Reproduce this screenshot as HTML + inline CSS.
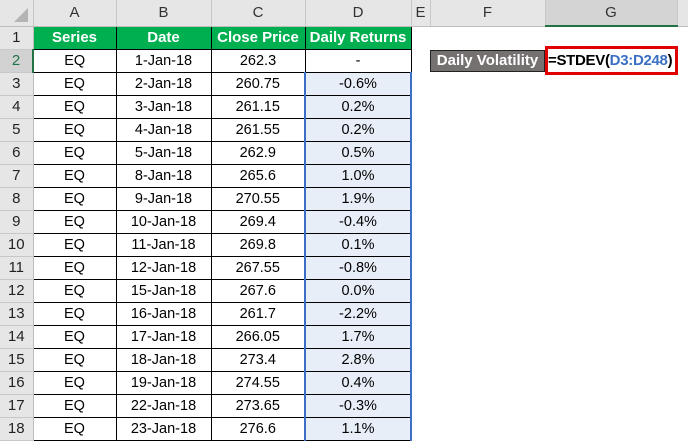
<!DOCTYPE html>
<html><head><style>
body{margin:0;width:688px;height:441px;overflow:hidden;background:#fff;font-family:"Liberation Sans",Calibri,sans-serif;position:relative}
table{border-collapse:collapse;table-layout:fixed;position:absolute;left:0;top:0}
td{padding:0;height:22px;text-align:center;font-size:14.5px;color:#000;white-space:nowrap;overflow:hidden}
tr.h td{height:25px;background:#e6e6e6;color:#333;font-size:15px;border-right:1px solid #c8c8c8;border-bottom:1px solid #bdbdbd}
td.rh{background:#e6e6e6;color:#222;font-size:15px;border-bottom:1px solid #c8c8c8;border-right:1px solid #bdbdbd}
td.d{border:1px solid #000}
td.g{background:#00b050;color:#fff;font-weight:bold;font-size:15px;border:1px solid #000}
td.s{background:#e8eef8;border:1px solid #000;border-left:2px solid #3b6fc4;border-right:2px solid #3b6fc4}
.vol{position:absolute;left:430px;top:50px;width:115px;height:22px;background:#767171;border:1px solid #222;box-sizing:border-box;color:#fff;font-weight:bold;font-size:15px;line-height:20px;text-align:center}
.f{position:absolute;left:545px;top:46px;width:133px;height:29px;border:3px solid #e00000;box-sizing:border-box;font-weight:bold;font-size:15px;line-height:23px;padding-left:0;background:#fff;white-space:nowrap;letter-spacing:-0.3px}
.f span{color:#3b6fc4}
</style></head><body>
<table>
<colgroup><col style="width:33px"><col style="width:83px"><col style="width:95px"><col style="width:94px"><col style="width:106px"><col style="width:19px"><col style="width:115px"><col style="width:132px"><col style="width:11px"></colgroup>
<tr class="h"><td><svg width="32" height="25" style="display:block"><polygon points="28,8 28,22 14,22" fill="#b4b4b4"/></svg></td><td>A</td><td>B</td><td>C</td><td>D</td><td>E</td><td>F</td><td style="border-bottom:2px solid #217346;background:#d4d4d4">G</td><td style="border-right:none"></td></tr>
<tr><td class="rh">1</td><td class="g">Series</td><td class="g">Date</td><td class="g">Close Price</td><td class="g">Daily Returns</td><td></td><td></td><td></td><td></td></tr>
<tr><td class="rh" style="background:#d2d2d2;color:#217346;border-right:2px solid #217346">2</td><td class="d">EQ</td><td class="d">1-Jan-18</td><td class="d">262.3</td><td class="d">-</td><td></td><td></td><td></td><td></td></tr>
<tr><td class="rh">3</td><td class="d">EQ</td><td class="d">2-Jan-18</td><td class="d">260.75</td><td class="s">-0.6%</td><td></td><td></td><td></td><td></td></tr>
<tr><td class="rh">4</td><td class="d">EQ</td><td class="d">3-Jan-18</td><td class="d">261.15</td><td class="s">0.2%</td><td></td><td></td><td></td><td></td></tr>
<tr><td class="rh">5</td><td class="d">EQ</td><td class="d">4-Jan-18</td><td class="d">261.55</td><td class="s">0.2%</td><td></td><td></td><td></td><td></td></tr>
<tr><td class="rh">6</td><td class="d">EQ</td><td class="d">5-Jan-18</td><td class="d">262.9</td><td class="s">0.5%</td><td></td><td></td><td></td><td></td></tr>
<tr><td class="rh">7</td><td class="d">EQ</td><td class="d">8-Jan-18</td><td class="d">265.6</td><td class="s">1.0%</td><td></td><td></td><td></td><td></td></tr>
<tr><td class="rh">8</td><td class="d">EQ</td><td class="d">9-Jan-18</td><td class="d">270.55</td><td class="s">1.9%</td><td></td><td></td><td></td><td></td></tr>
<tr><td class="rh">9</td><td class="d">EQ</td><td class="d">10-Jan-18</td><td class="d">269.4</td><td class="s">-0.4%</td><td></td><td></td><td></td><td></td></tr>
<tr><td class="rh">10</td><td class="d">EQ</td><td class="d">11-Jan-18</td><td class="d">269.8</td><td class="s">0.1%</td><td></td><td></td><td></td><td></td></tr>
<tr><td class="rh">11</td><td class="d">EQ</td><td class="d">12-Jan-18</td><td class="d">267.55</td><td class="s">-0.8%</td><td></td><td></td><td></td><td></td></tr>
<tr><td class="rh">12</td><td class="d">EQ</td><td class="d">15-Jan-18</td><td class="d">267.6</td><td class="s">0.0%</td><td></td><td></td><td></td><td></td></tr>
<tr><td class="rh">13</td><td class="d">EQ</td><td class="d">16-Jan-18</td><td class="d">261.7</td><td class="s">-2.2%</td><td></td><td></td><td></td><td></td></tr>
<tr><td class="rh">14</td><td class="d">EQ</td><td class="d">17-Jan-18</td><td class="d">266.05</td><td class="s">1.7%</td><td></td><td></td><td></td><td></td></tr>
<tr><td class="rh">15</td><td class="d">EQ</td><td class="d">18-Jan-18</td><td class="d">273.4</td><td class="s">2.8%</td><td></td><td></td><td></td><td></td></tr>
<tr><td class="rh">16</td><td class="d">EQ</td><td class="d">19-Jan-18</td><td class="d">274.55</td><td class="s">0.4%</td><td></td><td></td><td></td><td></td></tr>
<tr><td class="rh">17</td><td class="d">EQ</td><td class="d">22-Jan-18</td><td class="d">273.65</td><td class="s">-0.3%</td><td></td><td></td><td></td><td></td></tr>
<tr><td class="rh">18</td><td class="d">EQ</td><td class="d">23-Jan-18</td><td class="d">276.6</td><td class="s">1.1%</td><td></td><td></td><td></td><td></td></tr>
</table>
<div class="vol">Daily Volatility</div>
<div class="f">=STDEV(<span>D3:D248</span>)</div>
</body></html>
